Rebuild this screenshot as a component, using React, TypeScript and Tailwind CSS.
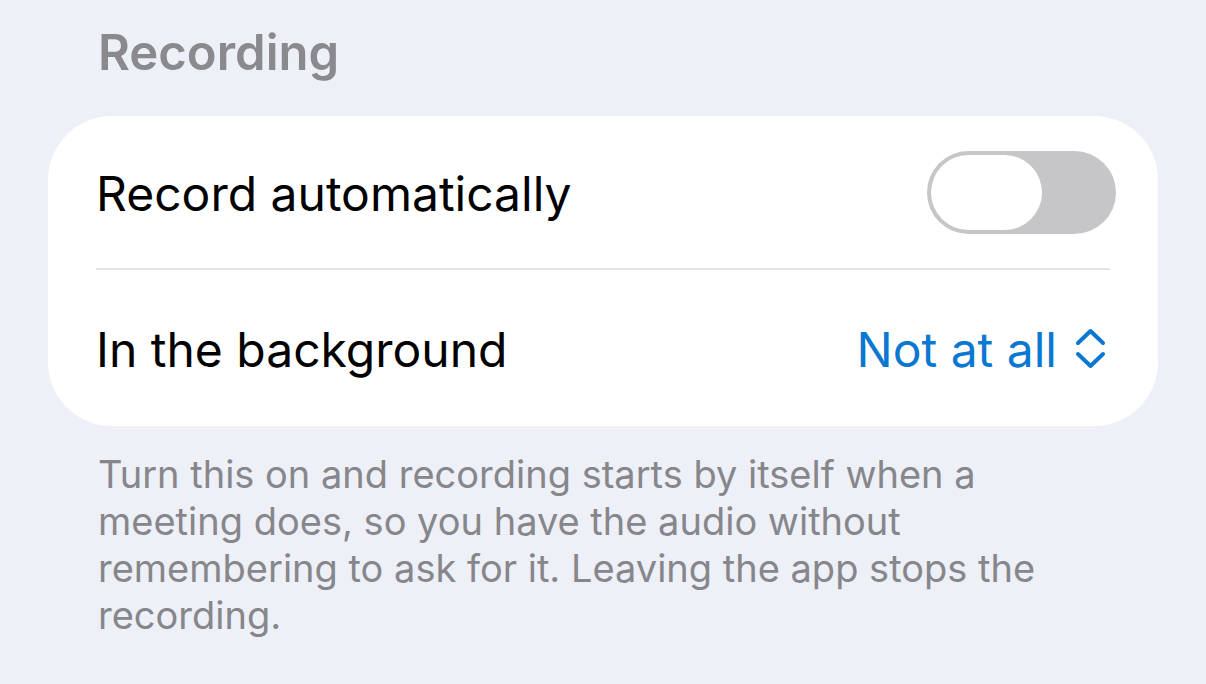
import { useState } from "react";

const font = { fontFamily: "Inter, 'Noto Sans', sans-serif" };

const Toggle = ({ on, onChange }: { on: boolean; onChange: (v: boolean) => void }) => (
  <button
    type="button"
    onClick={() => onChange(!on)}
    className={`flex h-[83px] w-[189px] shrink-0 items-center rounded-full p-[4px] ${
      on ? "justify-end bg-[#34c759]" : "justify-start bg-[#c6c6c8]"
    }`}
  >
    <span className="h-[75px] w-[111px] rounded-full bg-white" />
  </button>
);

const UpDown = () => (
  <svg width="31" height="41" viewBox="0 0 31 41" fill="none" className="shrink-0">
    <path
      d="M3 15 L15.5 3 L28 15 M3 26 L15.5 38 L28 26"
      stroke="#0a78d1"
      strokeWidth="4"
      strokeLinecap="round"
      strokeLinejoin="round"
    />
  </svg>
);

export default function App() {
  const [auto, setAuto] = useState(false);

  return (
    <div className="min-h-[684px] w-full bg-[#eef0f7] px-12 pt-[28px]" style={font}>
      <h2 className="mb-[39px] px-[50px] text-[49px] leading-none font-semibold text-[#8a8a8e]">
        Recording
      </h2>

      <div className="rounded-[64px] bg-white">
        <div className="flex h-[152px] items-center justify-between pl-12 pr-[42px]">
          <span className="pt-1 text-[48px] leading-none text-black">Record automatically</span>
          <Toggle on={auto} onChange={setAuto} />
        </div>
        <div className="mx-12 h-[2px] bg-[#e4e4e7]" />
        <div className="flex h-[156px] items-center justify-between pl-12 pr-[52px]">
          <span className="pt-1 text-[48px] leading-none text-black">In the background</span>
          <button type="button" className="flex items-center gap-[18px]">
            <span className="pt-1 text-[48px] leading-none text-[#0a78d1]">Not at all</span>
            <UpDown />
          </button>
        </div>
      </div>

      <p className="mt-[25px] px-[50px] text-[38px] leading-[47px] text-[#86868b]">
        Turn this on and recording starts by itself when a meeting does, so you have the audio
        without remembering to ask for it. Leaving the app stops the recording.
      </p>
    </div>
  );
}
